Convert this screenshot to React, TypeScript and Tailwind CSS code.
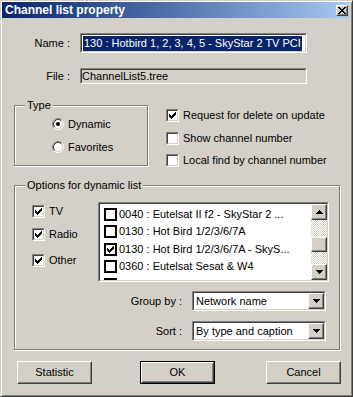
import React from "react";

function Pixels({ rows, color = "#000" }: { rows: string[]; color?: string }) {
  const w = rows[0].length;
  const h = rows.length;
  return (
    <svg width={w} height={h} viewBox={`0 0 ${w} ${h}`} shapeRendering="crispEdges" className="block">
      {rows.flatMap((r, y) =>
        r.split("").map((c, x) => (c === "X" ? <rect key={`${x}-${y}`} x={x} y={y} width="1" height="1" fill={color} /> : null))
      )}
    </svg>
  );
}

const CHECK = ["......X", ".....XX", "X...XXX", "XX.XXX.", "XXXXX..", ".XXX...", "..X...."];
const UP = ["...X...", "..XXX..", ".XXXXX.", "XXXXXXX"];
const DOWN = ["XXXXXXX", ".XXXXX.", "..XXX..", "...X..."];
const CLOSE = ["XX....XX", ".XX..XX.", "..XXXX..", "...XX...", "..XXXX..", ".XX..XX.", "XX....XX"];

function Raised({ className = "", children }: { className?: string; children?: React.ReactNode }) {
  return (
    <div className={`shrink-0 border border-t-white border-l-white border-r-[#404040] border-b-[#404040] ${className}`}>
      <div className="w-full h-full border border-t-[#d4d0c8] border-l-[#d4d0c8] border-r-[#808080] border-b-[#808080] flex items-center justify-center bg-[#d4d0c8]">
        {children}
      </div>
    </div>
  );
}

function Sunken({ className = "", inner = "", children }: { className?: string; inner?: string; children?: React.ReactNode }) {
  return (
    <div className={`shrink-0 border border-t-[#808080] border-l-[#808080] border-b-white border-r-white ${className}`}>
      <div className={`w-full h-full border border-t-[#404040] border-l-[#404040] border-b-[#d4d0c8] border-r-[#d4d0c8] ${inner}`}>
        {children}
      </div>
    </div>
  );
}

function CheckBox({ checked, label }: { checked?: boolean; label: string }) {
  return (
    <div className="flex items-center h-[13px]">
      <div className="w-[13px] h-[13px] shrink-0 border border-t-[#808080] border-l-[#808080] border-b-white border-r-white">
        <div className="w-full h-full border border-t-[#404040] border-l-[#404040] border-b-[#d4d0c8] border-r-[#d4d0c8] bg-white flex items-center justify-center">
          {checked && <Pixels rows={CHECK} />}
        </div>
      </div>
      <span className="ml-[4px] whitespace-nowrap">{label}</span>
    </div>
  );
}

function Radio({ checked, label }: { checked?: boolean; label: string }) {
  return (
    <div className="flex items-center h-[12px]">
      <svg width="12" height="12" viewBox="0 0 12 12" className="block shrink-0">
        <circle cx="6" cy="6" r="4.5" fill="#fff" />
        <path d="M2.11 9.89A5.5 5.5 0 0 1 9.89 2.11" stroke="#808080" fill="none" />
        <path d="M9.89 2.11A5.5 5.5 0 0 1 2.11 9.89" stroke="#fff" fill="none" />
        <path d="M2.82 9.18A4.5 4.5 0 0 1 9.18 2.82" stroke="#404040" fill="none" />
        <path d="M9.18 2.82A4.5 4.5 0 0 1 2.82 9.18" stroke="#d4d0c8" fill="none" />
        {checked && <circle cx="6" cy="6" r="2" fill="#000" />}
      </svg>
      <span className="ml-[4px]">{label}</span>
    </div>
  );
}

function Combo({ value }: { value: string }) {
  return (
    <Sunken className="w-[134px] h-[20px]" inner="bg-white flex items-center">
      <span className="flex-1 pl-[2px] whitespace-nowrap">{value}</span>
      <Raised className="w-[16px] h-full">
        <Pixels rows={DOWN} />
      </Raised>
    </Sunken>
  );
}

function Button({ label, isDefault }: { label: string; isDefault?: boolean }) {
  if (isDefault) {
    return (
      <div className="w-[75px] h-[23px] border border-black shrink-0">
        <Raised className="w-full h-full">{label}</Raised>
      </div>
    );
  }
  return <Raised className="w-[75px] h-[23px]">{label}</Raised>;
}

const channels = [
  { text: "0040 : Eutelsat II f2 - SkyStar 2 ...", checked: false },
  { text: "0130 : Hot Bird 1/2/3/6/7A", checked: false },
  { text: "0130 : Hot Bird 1/2/3/6/7A - SkyS...", checked: true },
  { text: "0360 : Eutelsat Sesat & W4", checked: false },
  { text: "0360 : Eutelsat Sesat & W4", checked: false },
];

export default function App() {
  return (
    <div className="w-[353px] h-[397px] bg-[#d4d0c8] border border-t-[#d4d0c8] border-l-[#d4d0c8] border-r-[#404040] border-b-[#404040] shadow-[inset_1px_1px_0_#fff,inset_-1px_-1px_0_#808080] pl-[1px] pt-[1px] pr-[3px] pb-[3px] flex flex-col font-['Liberation_Sans',Arial,sans-serif] text-[11px] text-black leading-[13px]">
      {/* title bar */}
      <div className="h-[16px] flex items-center bg-linear-to-r from-[#0a246a] to-[#a6caf0] pl-[3px] pr-[1px]">
        <span className="flex-1 text-white font-bold text-[12px] leading-none">Channel list property</span>
        <Raised className="w-[12px] h-[11px]">
          <Pixels rows={CLOSE} />
        </Raised>
      </div>

      <div className="flex flex-col pl-[12px]">
        {/* name */}
        <div className="mt-[15px] flex items-center">
          <span className="w-[66px] text-right pr-[10px]">Name :</span>
          <Sunken className="w-[227px] h-[20px]" inner="bg-white flex items-center pl-[1px]">
            <span className="bg-[#0a246a] text-white leading-[15px] whitespace-nowrap px-[1px]">
              130 : Hotbird 1, 2, 3, 4, 5 - SkyStar 2 TV PCI
            </span>
          </Sunken>
        </div>

        {/* file */}
        <div className="mt-[15px] flex items-center">
          <span className="w-[66px] text-right pr-[10px]">File :</span>
          <Sunken className="w-[227px] h-[16px]" inner="flex items-center">
            <span className="whitespace-nowrap">ChannelList5.tree</span>
          </Sunken>
        </div>

        {/* type + options */}
        <div className="mt-[21px] flex items-start">
          <div className="relative w-[134px] h-[61px] border border-[#808080] shadow-[inset_1px_1px_0_#fff,1px_1px_0_#fff] pl-[37px] pt-[12px] flex flex-col gap-[11px]">
            <span className="absolute -top-[7px] left-[10px] px-[2px] bg-[#d4d0c8]">Type</span>
            <Radio checked label="Dynamic" />
            <Radio label="Favorites" />
          </div>
          <div className="ml-[18px] pt-[4px] flex flex-col">
            <CheckBox checked label="Request for delete on update" />
            <div className="mt-[10px]">
              <CheckBox label="Show channel number" />
            </div>
            <div className="mt-[9px]">
              <CheckBox label="Local find by channel number" />
            </div>
          </div>
        </div>

        {/* options for dynamic list */}
        <div className="relative mt-[18px] w-[326px] h-[165px] border border-[#808080] shadow-[inset_1px_1px_0_#fff,1px_1px_0_#fff] pl-[17px] pt-[16px] flex">
          <span className="absolute -top-[7px] left-[10px] px-[2px] bg-[#d4d0c8]">Options for dynamic list</span>
          <div className="w-[66px] flex flex-col">
            <div className="mt-[3px]">
              <CheckBox checked label="TV" />
            </div>
            <div className="mt-[10px]">
              <CheckBox checked label="Radio" />
            </div>
            <div className="mt-[13px]">
              <CheckBox checked label="Other" />
            </div>
          </div>
          <div className="flex flex-col">
            <Sunken className="w-[231px] h-[80px]" inner="flex">
              <div className="flex-1 bg-white overflow-hidden pt-[1.5px]">
                {channels.map((c, i) => (
                  <div key={i} className="h-[17.5px] flex items-center pl-[4px] whitespace-nowrap">
                    <div className="w-[13px] h-[13px] shrink-0 border-2 border-black bg-white flex items-center justify-center">
                      {c.checked && <Pixels rows={CHECK} />}
                    </div>
                    <span className="ml-[2px]">{c.text}</span>
                  </div>
                ))}
              </div>
              <div className="w-[16px] flex flex-col">
                <Raised className="w-[16px] h-[16px]">
                  <Pixels rows={UP} />
                </Raised>
                <div className="flex-1 bg-[image:repeating-conic-gradient(#fff_0_25%,#d4d0c8_0_50%)] bg-[length:2px_2px]">
                  <Raised className="mt-[17px] w-[16px] h-[15px]" />
                </div>
                <Raised className="w-[16px] h-[16px]">
                  <Pixels rows={DOWN} />
                </Raised>
              </div>
            </Sunken>
            <div className="mt-[9px] flex items-center justify-end pr-[3px]">
              <span className="mr-[10px]">Group by :</span>
              <Combo value="Network name" />
            </div>
            <div className="mt-[10px] flex items-center justify-end pr-[3px]">
              <span className="mr-[10px]">Sort :</span>
              <Combo value="By type and caption" />
            </div>
          </div>
        </div>

        {/* buttons */}
        <div className="mt-[11px] ml-[3px] flex">
          <Button label="Statistic" />
          <div className="ml-[48px]">
            <Button label="OK" isDefault />
          </div>
          <div className="ml-[51px]">
            <Button label="Cancel" />
          </div>
        </div>
      </div>
    </div>
  );
}
